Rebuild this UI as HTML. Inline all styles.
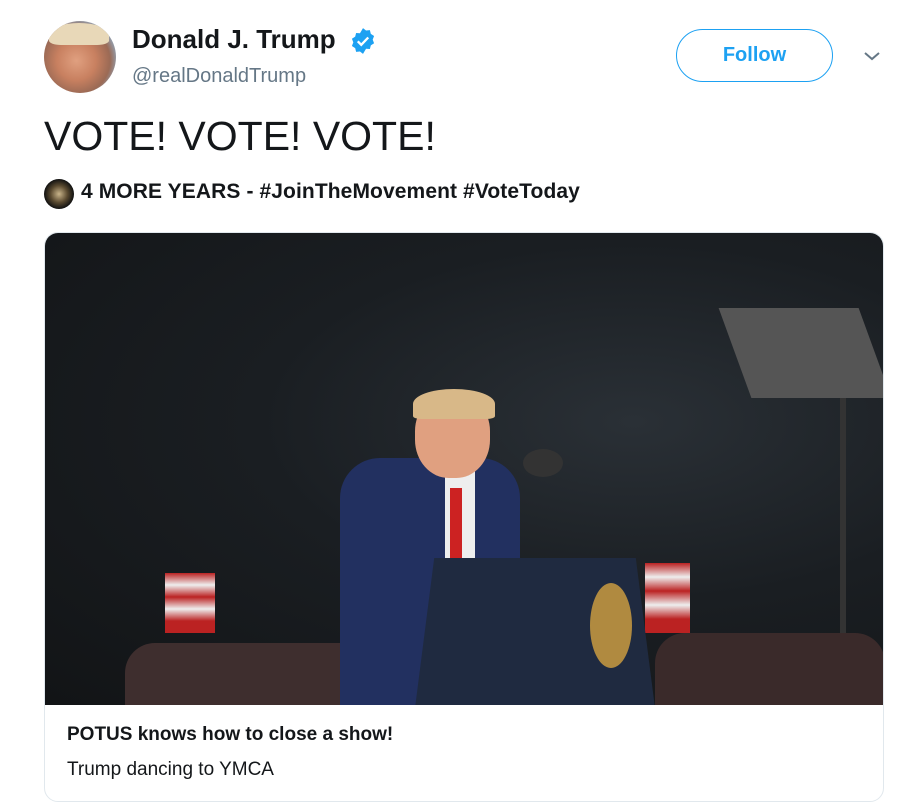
<!DOCTYPE html>
<html><head><meta charset="utf-8"><style>
body{margin:0;width:923px;height:810px;background:#fff;font-family:"Liberation Sans",Arial,sans-serif;position:relative;overflow:hidden}
.a{position:absolute}
</style></head><body>
<div class="a" style="left:44px;top:21px;width:72px;height:72px;border-radius:50%;background:radial-gradient(circle at 45% 55%,#e0a080 0,#c88060 35%,#9b6a55 60%,#8fb8d8 80%);overflow:hidden">
<div class="a" style="left:5px;top:2px;width:60px;height:22px;border-radius:50% 50% 20% 20%;background:#e8d8b8"></div></div>
<div class="a" style="left:132px;top:24px;font-size:26px;font-weight:bold;color:#14171a">Donald J. Trump</div>
<svg class="a" style="left:349px;top:27px" width="28" height="28" viewBox="0 0 24 24"><path fill="#1da1f2" d="M12 1l2.6 2 3.3-.3.8 3.2 2.8 1.8-1.2 3.1 1.2 3.1-2.8 1.8-.8 3.2-3.3-.3L12 23l-2.6-2-3.3.3-.8-3.2-2.8-1.8 1.2-3.1-1.2-3.1 2.8-1.8.8-3.2 3.3.3z"/><path d="M7.5 12.3l3 3 6-6.3" stroke="#fff" stroke-width="2" fill="none"/></svg>
<div class="a" style="left:132px;top:65px;font-size:20px;color:#657786">@realDonaldTrump</div>
<div class="a" style="left:676px;top:29px;width:157px;height:53px;border:1.5px solid #1da1f2;border-radius:27px;box-sizing:border-box;color:#1da1f2;font-weight:bold;font-size:20px;text-align:center;line-height:51px">Follow</div>
<svg class="a" style="left:862px;top:49px" width="20" height="14" viewBox="0 0 20 14"><path d="M3 4l7 6 7-6" stroke="#657786" stroke-width="2" fill="none"/></svg>
<div class="a" style="left:44px;top:113px;font-size:41px;color:#14171a">VOTE! VOTE! VOTE!</div>
<div class="a" style="left:44px;top:179px;width:30px;height:30px;border-radius:50%;background:radial-gradient(circle,#c9b48a 0,#5a4a30 40%,#111 70%)"></div>
<div class="a" style="left:81px;top:180px;font-size:21px;font-weight:bold;color:#14171a;letter-spacing:0.1px">4 MORE YEARS - #JoinTheMovement #VoteToday</div>
<div class="a" style="left:44px;top:232px;width:840px;height:570px;border:1px solid #e1e8ed;border-radius:14px;box-sizing:border-box;overflow:hidden">
<div class="a" style="left:0;top:0;width:840px;height:472px;background:radial-gradient(ellipse at 70% 40%,#2a3036 0,#1a1e22 45%,#121416 100%);overflow:hidden">
<div class="a" style="left:690px;top:75px;width:140px;height:90px;background:#555;transform:skewX(20deg)"></div>
<div class="a" style="left:795px;top:165px;width:6px;height:310px;background:#333"></div>
<div class="a" style="left:80px;top:410px;width:280px;height:70px;background:#3e2e2e;border-radius:30px 30px 0 0"></div>
<div class="a" style="left:610px;top:400px;width:230px;height:80px;background:#3a2a2a;border-radius:30px 30px 0 0"></div>
<div class="a" style="left:120px;top:340px;width:50px;height:60px;background:linear-gradient(#b22 0,#eee 20%,#b22 40%,#eee 60%,#b22 80%)"></div>
<div class="a" style="left:600px;top:330px;width:45px;height:70px;background:linear-gradient(#b22 0,#eee 20%,#b22 40%,#eee 60%,#b22 80%)"></div>
<div class="a" style="left:295px;top:225px;width:180px;height:250px;background:#223060;border-radius:40px 40px 0 0"></div>
<div class="a" style="left:400px;top:235px;width:30px;height:110px;background:#eee"></div>
<div class="a" style="left:405px;top:255px;width:12px;height:90px;background:#c22"></div>
<div class="a" style="left:370px;top:160px;width:75px;height:85px;border-radius:45%;background:#e0a080"></div>
<div class="a" style="left:368px;top:156px;width:82px;height:30px;border-radius:50% 50% 10% 10%;background:#d8b888"></div>
<div class="a" style="left:478px;top:216px;width:40px;height:28px;border-radius:50%;background:#333"></div>
<div class="a" style="left:370px;top:325px;width:240px;height:150px;background:#1f2a40;clip-path:polygon(8% 0,92% 0,100% 100%,0 100%)"></div>
<div class="a" style="left:545px;top:350px;width:42px;height:85px;border-radius:50%;background:#b08a40"></div>
</div>
<div class="a" style="left:22px;top:491px;font-size:19px;font-weight:bold;color:#14171a">POTUS knows how to close a show!</div>
<div class="a" style="left:22px;top:526px;font-size:19px;color:#14171a">Trump dancing to YMCA</div>
</div>
</body></html>
